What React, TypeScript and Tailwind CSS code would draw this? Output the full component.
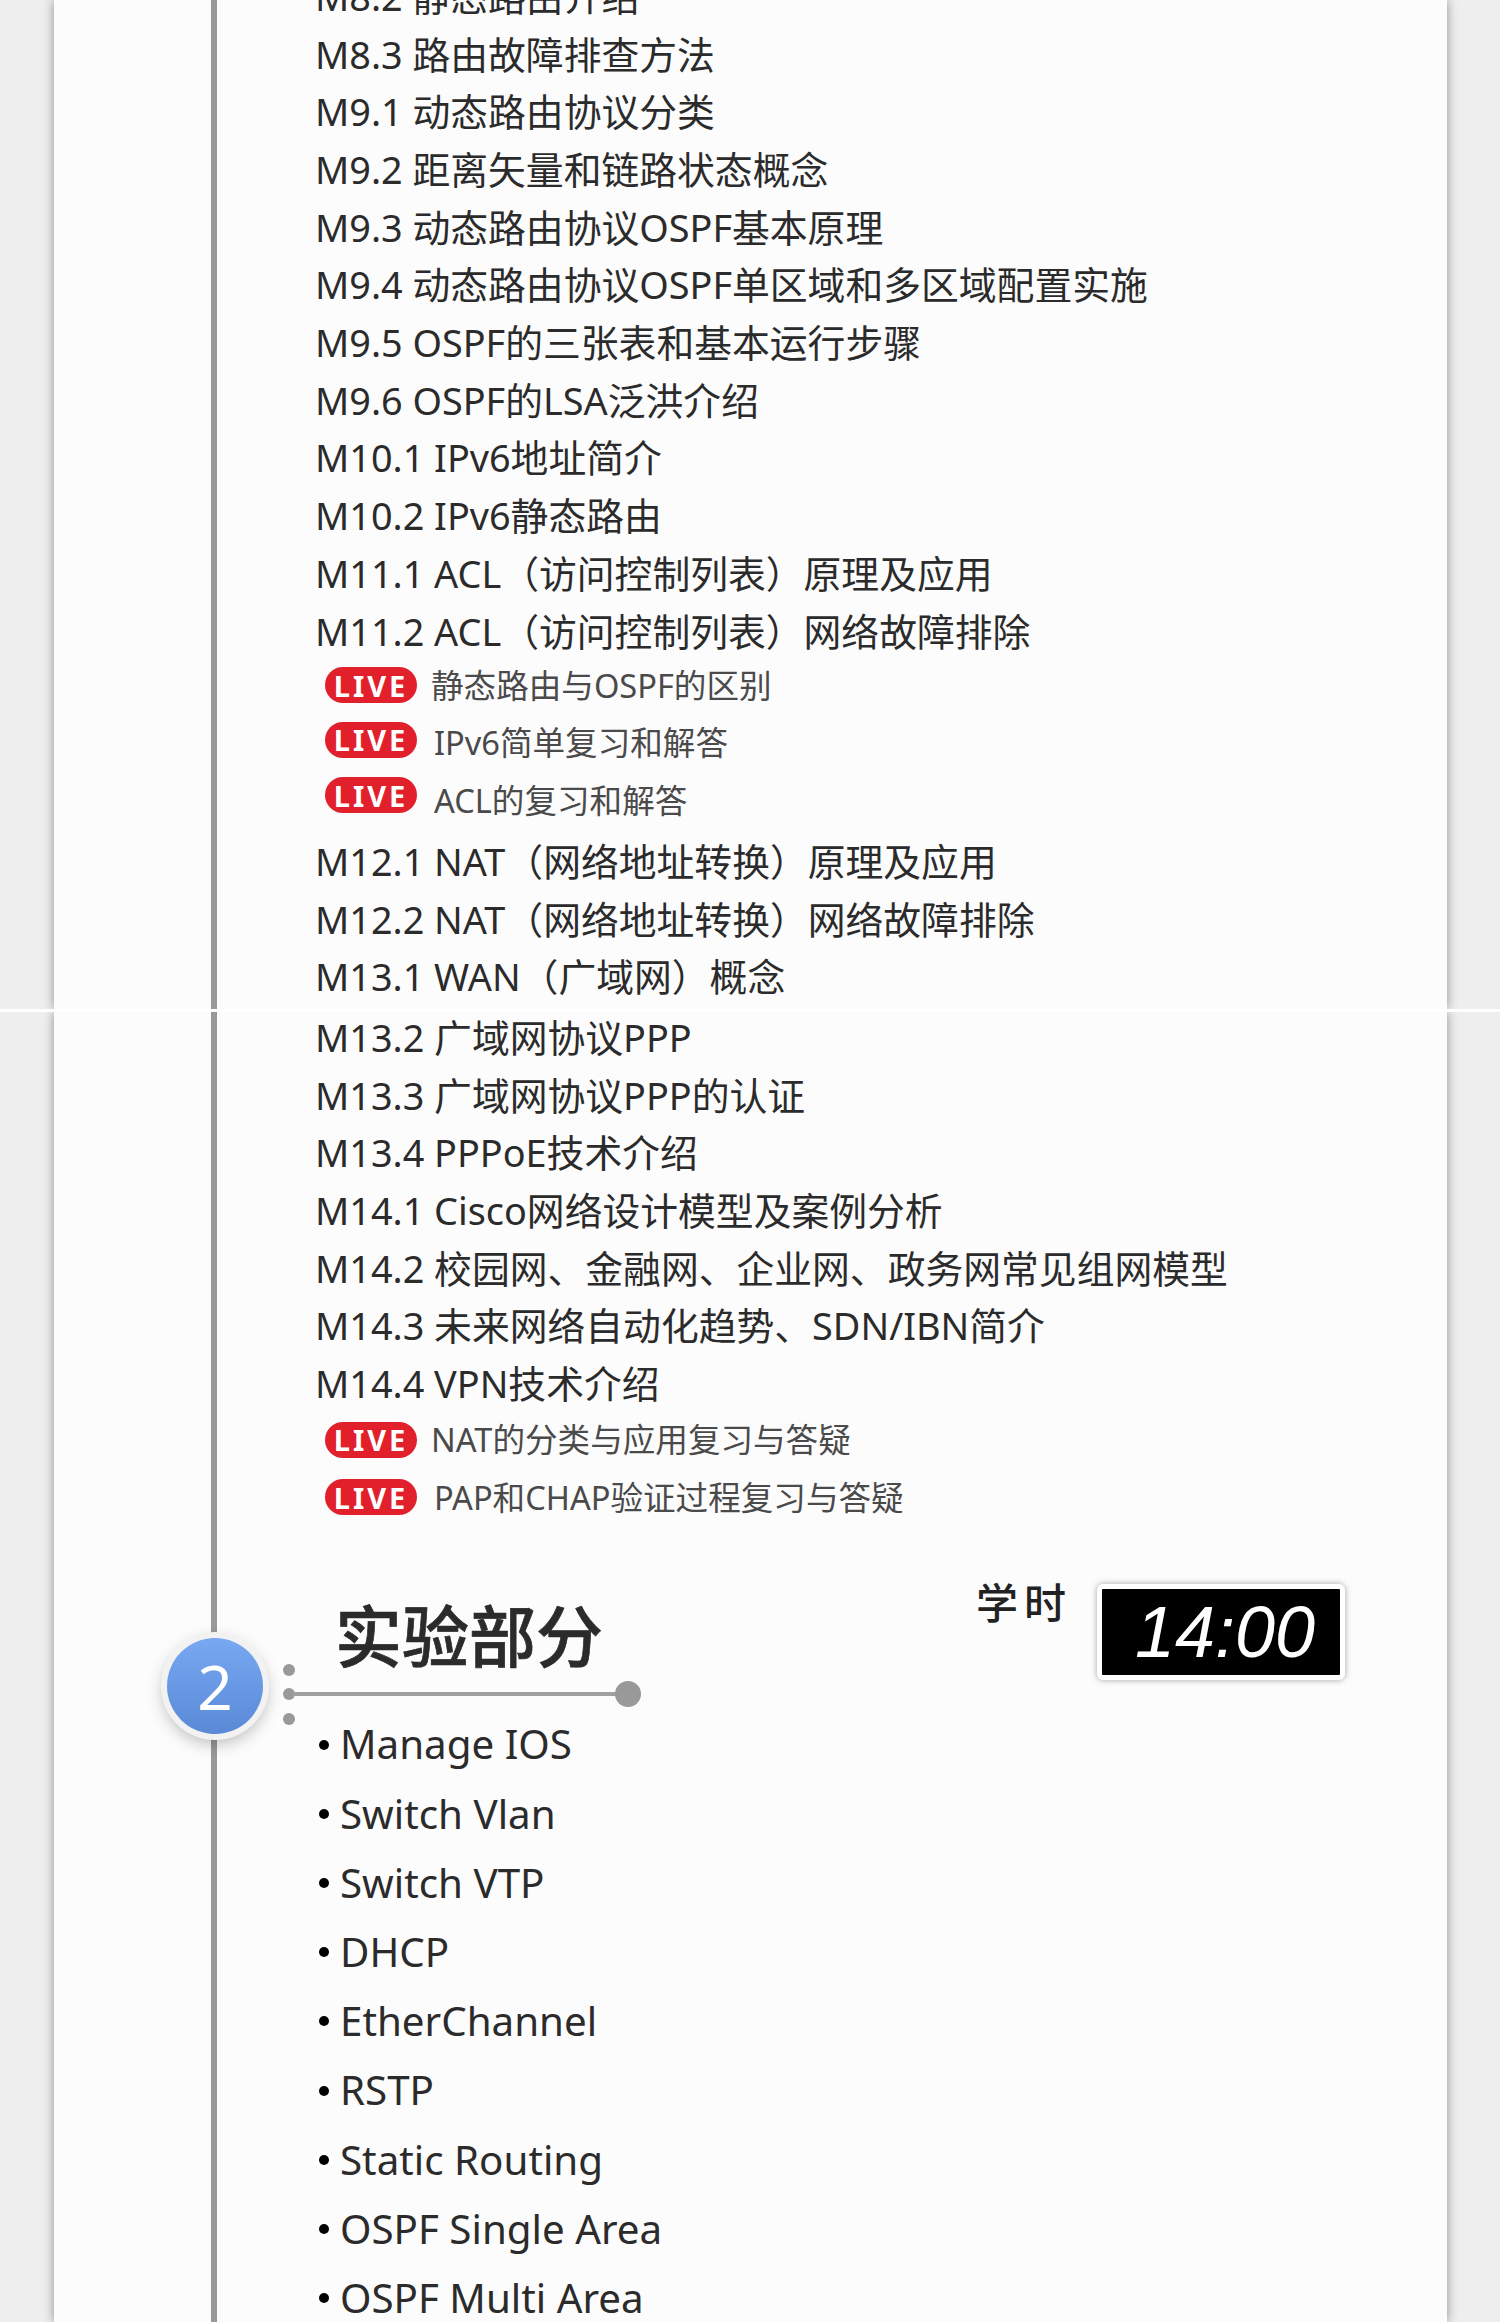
const FONT = "font-['Noto_Sans','Noto_Sans_CJK_SC',sans-serif]";

// badge / label: how far each sits above the row's centre, these rows are not evenly spaced in the picture
type Row = { text: string; live?: boolean; nudge?: boolean; badge?: string; label?: string };

const TOP_ROWS: Row[] = [
  { text: 'M8.2 静态路由介绍' },
  { text: 'M8.3 路由故障排查方法' },
  { text: 'M9.1 动态路由协议分类' },
  { text: 'M9.2 距离矢量和链路状态概念' },
  { text: 'M9.3 动态路由协议OSPF基本原理' },
  { text: 'M9.4 动态路由协议OSPF单区域和多区域配置实施' },
  { text: 'M9.5 OSPF的三张表和基本运行步骤' },
  { text: 'M9.6 OSPF的LSA泛洪介绍' },
  { text: 'M10.1 IPv6地址简介' },
  { text: 'M10.2 IPv6静态路由' },
  { text: 'M11.1 ACL（访问控制列表）原理及应用' },
  { text: 'M11.2 ACL（访问控制列表）网络故障排除' },
  { text: '静态路由与OSPF的区别', live: true, badge: 'mb-[8px]', label: 'mb-[6px]' },
  { text: 'IPv6简单复习和解答', live: true, nudge: true, badge: 'mb-[14px]', label: 'mb-[6px]' },
  { text: 'ACL的复习和解答', live: true, nudge: true, badge: 'mb-[18px]', label: 'mb-[5px]' },
  { text: 'M12.1 NAT（网络地址转换）原理及应用' },
  { text: 'M12.2 NAT（网络地址转换）网络故障排除' },
  { text: 'M13.1 WAN（广域网）概念' },
];

const BOTTOM_ROWS: Row[] = [
  { text: 'M13.2 广域网协议PPP' },
  { text: 'M13.3 广域网协议PPP的认证' },
  { text: 'M13.4 PPPoE技术介绍' },
  { text: 'M14.1 Cisco网络设计模型及案例分析' },
  { text: 'M14.2 校园网、金融网、企业网、政务网常见组网模型' },
  { text: 'M14.3 未来网络自动化趋势、SDN/IBN简介' },
  { text: 'M14.4 VPN技术介绍' },
  { text: 'NAT的分类与应用复习与答疑', live: true, badge: 'mb-[4px]', label: 'mb-[2px]' },
  { text: 'PAP和CHAP验证过程复习与答疑', live: true, nudge: true, badge: 'mb-[4px]', label: 'mb-[2px]' },
];

const LABS = [
  'Manage IOS',
  'Switch Vlan',
  'Switch VTP',
  'DHCP',
  'EtherChannel',
  'RSTP',
  'Static Routing',
  'OSPF Single Area',
  'OSPF Multi Area',
];

const CourseRow = ({ row }: { row: Row }) => {
  if (row.live) {
    return (
      <div className="flex h-[57.6px] items-center pl-[10px]">
        <span
          className={`flex h-[36px] w-[92px] items-center justify-center rounded-full bg-[#e1202c] text-[29px] leading-none font-bold tracking-[3px] text-white ${row.badge}`}
        >
          LIVE
        </span>
        <span
          className={`text-[32.6px] leading-none text-[#4a4a4a] ${row.nudge ? 'ml-[17px]' : 'ml-[14px]'} ${row.label}`}
        >
          {row.text}
        </span>
      </div>
    );
  }
  return <div className="flex h-[57.7px] items-center text-[37.8px] leading-none text-[#2b2b2b]">{row.text}</div>;
};

// one long screenshot panel: grey page, white sheet, timeline rail
const Sheet = ({ children, clip }: { children: React.ReactNode; clip: string }) => (
  <div className={`overflow-hidden bg-[#eeeeee] ${clip}`}>
    <div className="ml-[54px] h-full w-[1393px] bg-[#fdfcfd] shadow-[0_0_10px_rgba(0,0,0,0.4)]">
      <div className="relative ml-[157px] flow-root h-full border-l-[6px] border-[#999999] pl-[98px]">{children}</div>
    </div>
  </div>
);

const App = () => (
  <div className={`h-[2322px] w-[1500px] overflow-hidden ${FONT}`}>
    <Sheet clip="h-[1009px]">
      <div className="-mt-[32px]">
        {TOP_ROWS.map((row) => (
          <CourseRow key={row.text} row={row} />
        ))}
      </div>
    </Sheet>

    <div className="h-[3px] bg-white" />

    <Sheet clip="h-[1310px]">
      <div className="-mt-[3px]">
        {BOTTOM_ROWS.map((row) => (
          <CourseRow key={row.text} row={row} />
        ))}
      </div>

      {/* Section heading */}
      <div className="relative mt-[63px] h-[119px]">
        <h2 className="pl-[20px] text-[67px] leading-[90px] font-medium text-[#2b2b2b] [-webkit-text-stroke:0.7px_#2b2b2b]">
          实验部分
        </h2>

        <div className="absolute top-[-7px] right-[102px] flex items-start gap-[25px]">
          <span className="-mt-[2px] text-[42px] leading-none font-medium tracking-[6px] text-[#222222]">学时</span>
          <div className="flex h-[96px] w-[248px] items-center justify-center rounded-[6px] border-[5px] border-white bg-black pl-[8px] shadow-[0_0_6px_rgba(0,0,0,0.35)]">
            <span className="font-['Liberation_Sans',sans-serif] text-[72px] leading-none text-white italic">14:00</span>
          </div>
        </div>

        <div className="absolute top-[73px] left-[-32px] h-[12px] w-[12px] rounded-full bg-[#999999]" />
        <div className="absolute top-[97px] left-[-32px] flex h-[12px] w-[358px] items-center">
          <div className="h-[12px] w-[12px] rounded-full bg-[#999999]" />
          <div className="-ml-[2px] h-[4px] flex-1 bg-[#a0a0a0]" />
          <div className="-my-[8px] -ml-[2px] h-[26px] w-[26px] rounded-full bg-[#999999]" />
        </div>
        <div className="absolute top-[122px] left-[-32px] h-[12px] w-[12px] rounded-full bg-[#999999]" />

        <div className="absolute top-[47px] left-[-148px] flex h-[96px] w-[96px] items-center justify-center rounded-full bg-gradient-to-b from-[#78a8f2] to-[#5a8ad6] text-[62px] leading-none text-white shadow-[0_0_0_6px_#f3f2f2,0_6px_16px_4px_rgba(0,0,0,0.25)]">
          2
        </div>
      </div>

      {/* Lab list */}
      <ul>
        {LABS.map((lab) => (
          <li key={lab} className="flex h-[69.2px] items-center text-[40.3px] leading-none text-[#2b2b2b]">
            <span className="mr-[11px] ml-[4px] h-[10px] w-[10px] rounded-full bg-black" />
            {lab}
          </li>
        ))}
      </ul>
    </Sheet>
  </div>
);

export default App;
